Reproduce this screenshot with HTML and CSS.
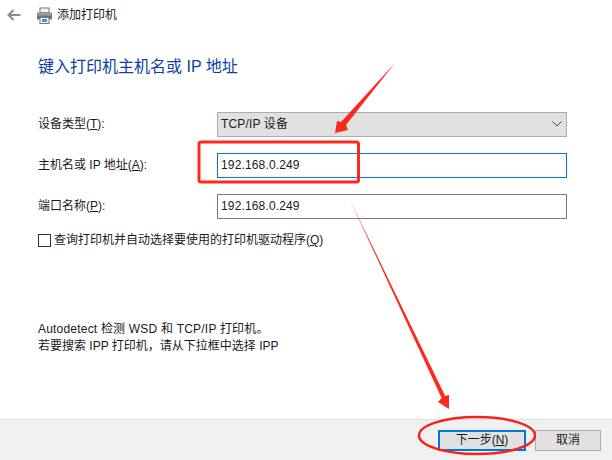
FILE: index.html
```html
<!DOCTYPE html>
<html lang="zh-CN">
<head>
<meta charset="utf-8">
<title>添加打印机</title>
<link rel="stylesheet" href="styles.css">
</head>
<body>
<div class="dialog">
  <header class="titlebar">
    <svg class="back" width="14" height="12" viewBox="0 0 14 12"><path d="M6.500 1 1.500 6l5 5M2 6h11.500" fill="none" stroke="#8a8a8a" stroke-width="2"/></svg>
    <svg class="printer" width="17" height="17" viewBox="0 0 17 17">
      <rect x="4" y="1" width="9" height="5" fill="#f4f4f4" stroke="#777"/>
      <rect x="1" y="5.500" width="15" height="7" rx="1" fill="#6f7478"/>
      <rect x="1.500" y="6" width="14" height="2.500" fill="#9a9ea2"/>
      <rect x="13" y="7" width="2" height="1" fill="#5fd05f"/>
      <rect x="4" y="10.500" width="9" height="6" fill="#fff" stroke="#777"/>
      <rect x="6" y="12" width="5" height="3" fill="#3a9bd0"/>
    </svg>
    <span class="window-title">添加打印机</span>
  </header>
  <main class="content">
    <h1 class="heading">键入打印机主机名或 IP 地址</h1>
    <div class="form">
      <label class="label">设备类型(<u>T</u>):</label>
      <div class="field combo"><span>TCP/IP 设备</span>
        <svg width="10" height="6" viewBox="0 0 10 6"><path d="M.5.500 5 5 9.500.5" fill="none" stroke="#444" stroke-width="1"/></svg>
      </div>
      <label class="label">主机名或 IP 地址(<u>A</u>):</label>
      <div class="field focused">192.168.0.249</div>
      <label class="label">端口名称(<u>P</u>):</label>
      <div class="field">192.168.0.249</div>
    </div>
    <div class="check-row"><span class="checkbox"></span><span>查询打印机并自动选择要使用的打印机驱动程序(<u>Q</u>)</span></div>
    <p class="note"><span class="note-wide">Autodetect 检测 WSD 和 TCP/IP 打印机。</span><br>若要搜索 IPP 打印机，请从下拉框中选择 IPP</p>
  </main>
  <footer class="footer">
    <div class="btn primary">下一步(<u>N</u>)</div>
    <div class="btn">取消</div>
  </footer>
  <svg class="marks" width="612" height="460" viewBox="0 0 612 460">
    <rect x="199" y="142" width="159.500" height="40" rx="2" fill="none" stroke="#fb2a1c" stroke-width="3"/>
    <path d="M395 63 341 122 337 121 335 133 348 130 346 125Z" fill="#fb2a1c"/>
    <path d="M350 200 445.200 396.100 449 395 449 409 438 402 441.600 397.900Z" fill="#fb2a1c"/>
    <ellipse cx="477" cy="435.500" rx="58" ry="18.500" fill="none" stroke="#f4241a" stroke-width="2.500"/>
  </svg>
</div>
</body>
</html>
```
FILE: styles.css
```css
* { box-sizing: border-box; }
html, body { margin: 0; padding: 0; }
body {
  background: #fff;
  color: #1a1a1a;
  font: 12px/16px "Liberation Sans", "Noto Sans CJK SC", sans-serif;
}
.dialog {
  position: relative;
  width: 612px;
  height: 460px;
  display: flex;
  flex-direction: column;
  overflow: hidden;
}
.titlebar {
  height: 30px;
  display: flex;
  align-items: center;
  padding-left: 7px;
  flex: none;
}
.back { margin-right: 15px; }
.printer { margin-right: 4px; }
.window-title { font-size: 12px; }
.content {
  flex: 1;
  padding: 26px 45px 0 38px;
  display: flex;
  flex-direction: column;
}
.heading {
  margin: 0;
  font-size: 16px;
  font-weight: 400;
  line-height: 22px;
  color: #0b3fa8;
}
.form {
  margin-top: 34px;
  display: grid;
  grid-template-columns: 179px 350px;
  grid-auto-rows: 25px;
  row-gap: 16px;
  align-items: center;
}
.label { padding-bottom: 2px; }
.field {
  height: 25px;
  border: 1px solid #7a7a7a;
  padding: 0 3px 2px;
  display: flex;
  align-items: center;
  letter-spacing: .15px;
}
.combo {
  background: #e1e1e1;
  border: 1px solid #adadad;
  justify-content: space-between;
  padding-right: 4px;
}
.focused { border-color: #0078d7; }
.check-row {
  margin-top: 13px;
  display: flex;
  align-items: center;
  gap: 3px;
  height: 16px;
}
.checkbox {
  width: 13px;
  height: 13px;
  border: 1px solid #333;
  background: #fff;
}
.note {
  margin: 73px 0 0;
  line-height: 17px;
}
.note-wide { letter-spacing: .2px; }
.footer {
  height: 41px;
  flex: none;
  background: #f0f0f0;
  border-top: 1px solid #dfdfdf;
  display: flex;
  justify-content: flex-end;
  align-items: center;
  gap: 9px;
  padding: 0 11px 0 0;
}
.btn {
  width: 66px;
  height: 21px;
  background: #e1e1e1;
  border: 1px solid #adadad;
  display: flex;
  align-items: center;
  justify-content: center;
}
.primary {
  width: 88px;
  border: 2px solid #0078d7;
}
.marks {
  position: absolute;
  left: 0;
  top: 0;
  pointer-events: none;
}
```
